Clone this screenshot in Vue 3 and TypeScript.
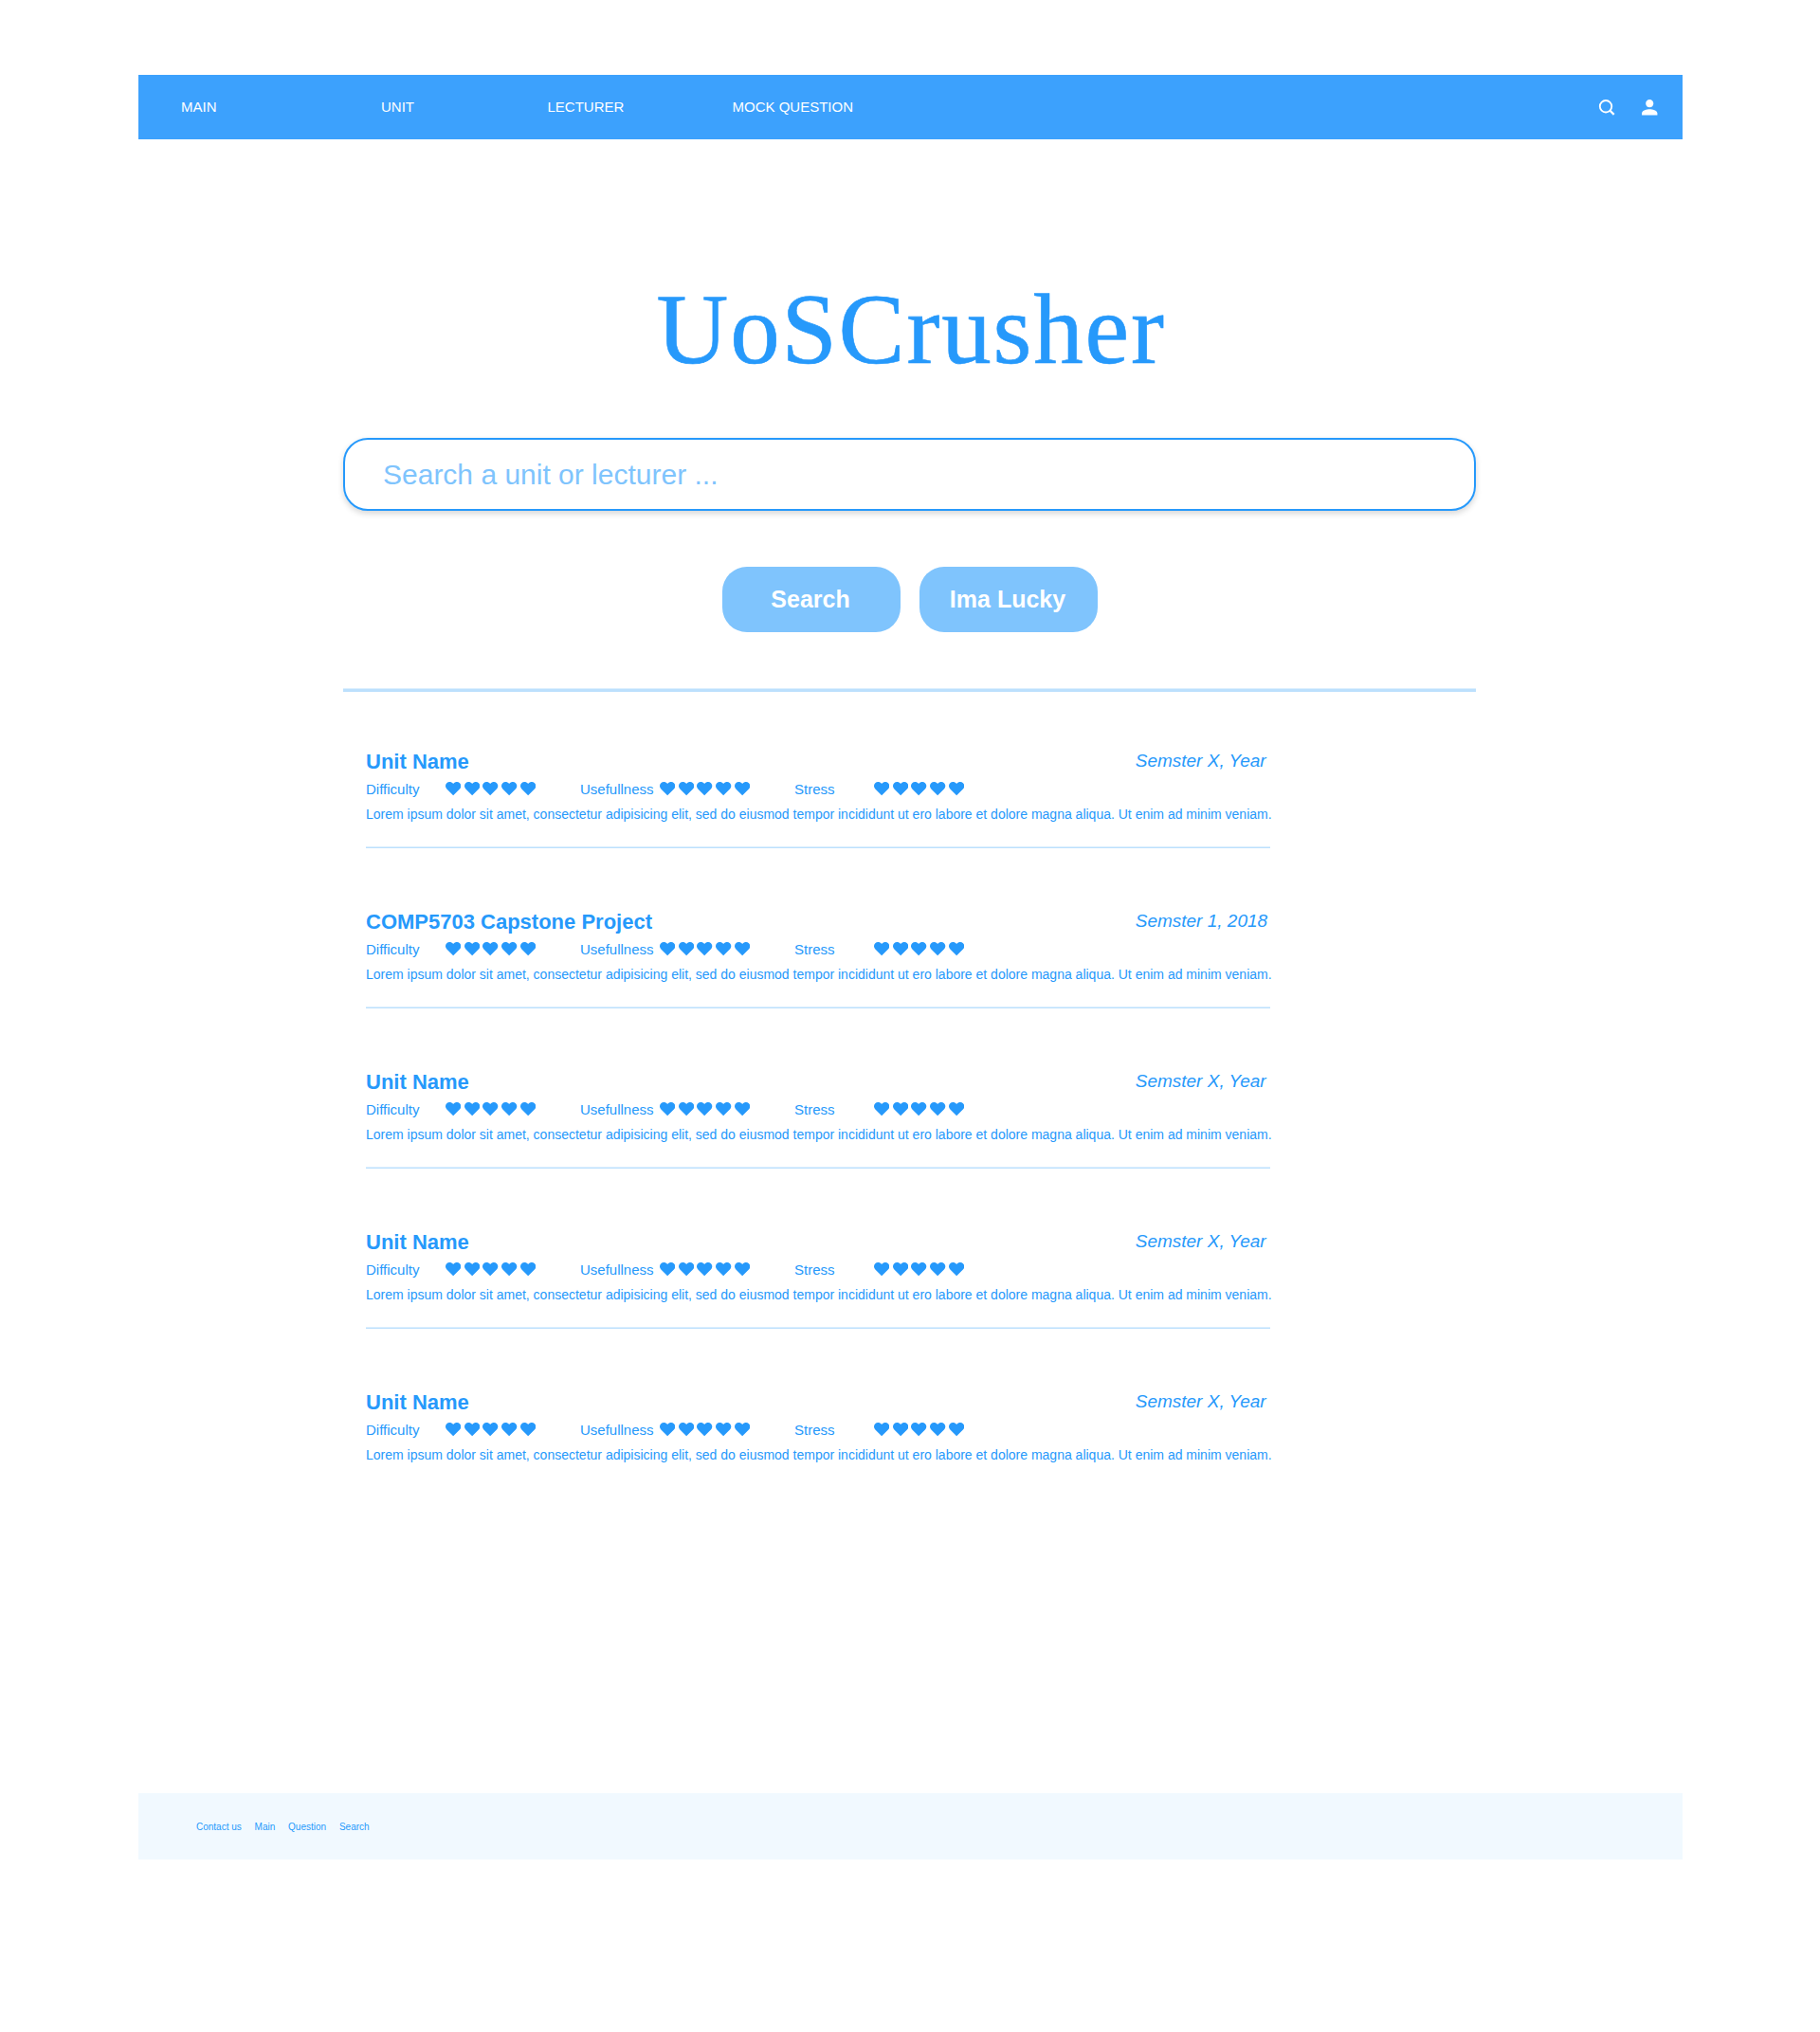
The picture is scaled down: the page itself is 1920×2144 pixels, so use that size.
<script setup lang="ts">
interface Unit {
  name: string
  term: string
}

const navItems: string[] = ['MAIN', 'UNIT', 'LECTURER', 'MOCK QUESTION']
const ratings: string[] = ['Difficulty', 'Usefullness', 'Stress']
const footerLinks: string[] = ['Contact us', 'Main', 'Question', 'Search']
const description =
  'Lorem ipsum dolor sit amet, consectetur adipisicing elit, sed do eiusmod tempor incididunt ut ero labore et dolore magna aliqua. Ut enim ad minim veniam.'

const units: Unit[] = [
  { name: 'Unit Name', term: 'Semster X, Year' },
  { name: 'COMP5703 Capstone Project', term: 'Semster 1, 2018' },
  { name: 'Unit Name', term: 'Semster X, Year' },
  { name: 'Unit Name', term: 'Semster X, Year' },
  { name: 'Unit Name', term: 'Semster X, Year' },
]
</script>

<template>
  <div class="page">
    <header class="navbar">
      <nav class="links">
        <a v-for="item in navItems" :key="item">{{ item }}</a>
      </nav>
      <div class="tools">
        <svg class="search-icon" viewBox="0 0 24 24" fill="none" stroke="#fff">
          <circle cx="10.8" cy="11" r="6.1" stroke-width="1.8" />
          <path d="M15.2 15.4 L19.3 19.5" stroke-width="2.2" />
        </svg>
        <svg class="user-icon" viewBox="0 0 24 24" fill="#fff">
          <path d="M12 12c2.21 0 4-1.79 4-4s-1.79-4-4-4-4 1.79-4 4 1.79 4 4 4zm0 2c-2.67 0-8 1.34-8 4v2h16v-2c0-2.66-5.33-4-8-4z" />
        </svg>
      </div>
    </header>

    <main>
      <h1>UoSCrusher</h1>
      <div class="search-box">Search a unit or lecturer ...</div>
      <div class="actions">
        <button>Search</button>
        <button>Ima Lucky</button>
      </div>
      <div class="divider"></div>

      <section class="units">
        <article v-for="(unit, i) in units" :key="i" class="unit">
          <div class="heading">
            <h2>{{ unit.name }}</h2>
            <span class="term">{{ unit.term }}</span>
          </div>
          <div class="ratings">
            <div v-for="rating in ratings" :key="rating" class="rating">
              <span class="label">{{ rating }}</span>
              <svg v-for="n in 5" :key="n" class="heart" viewBox="0 0 16.3 14.3">
                <path d="M8.15 14.2L1.35 7.6C-.45 5.8-.45 2.9 1.3 1.2 3-.3 6-.4 8.15 1.9 10.3-.4 13.3-.3 15 1.2c1.75 1.7 1.75 4.6-.05 6.4z" />
              </svg>
            </div>
          </div>
          <p>{{ description }}</p>
        </article>
      </section>
    </main>

    <footer>
      <a v-for="link in footerLinks" :key="link">{{ link }}</a>
    </footer>
  </div>
</template>

<style>
body {
  background: #fff;
}
</style>

<style scoped>
.page {
  box-sizing: border-box;
  display: flex;
  flex-direction: column;
  width: 1920px;
  height: 2144px;
  padding: 79px 145px 182px 146px;
  font-family: "Liberation Sans", Arial, sans-serif;
  color: #2699fb;
}

.navbar {
  display: flex;
  justify-content: space-between;
  align-items: center;
  box-sizing: border-box;
  height: 68px;
  padding: 0 23px 0 45px;
  background: #3ca1fd;
  color: #fff;
}

.links {
  display: grid;
  grid-template-columns: 211px 175.5px 195px auto;
  font-size: 15px;
  line-height: 18px;
}

.tools {
  display: flex;
  gap: 20px;
}

.search-icon,
.user-icon {
  width: 24.5px;
  height: 24.5px;
}

main {
  display: flex;
  flex-direction: column;
  flex: 1;
  width: 1195px;
  margin-left: 216px;
}

h1 {
  margin: 141px 0 0;
  height: 174px;
  padding-left: 330.5px;
  font: 400 105px/120px Georgia, "Liberation Serif", serif;
  letter-spacing: 1.8px;
  -webkit-text-stroke: 0.6px #2699fb;
  white-space: nowrap;
}

.search-box {
  box-sizing: border-box;
  height: 77px;
  padding-left: 40px;
  border: 2px solid #2699fb;
  border-radius: 26px;
  box-shadow: 0 3px 6px rgba(0, 0, 0, 0.16);
  font-size: 30px;
  line-height: 73px;
  color: #7fc4fd;
}

.actions {
  display: flex;
  justify-content: center;
  gap: 20px;
  margin: 59px 0;
  padding-left: 1px;
}

button {
  width: 188px;
  height: 69px;
  padding: 0 2px 0 0;
  border: 0;
  border-radius: 26px;
  background: #7fc4fd;
  color: #fff;
  font: 700 25px/69px "Liberation Sans", Arial, sans-serif;
}

.divider {
  height: 3px;
  border-top: 1px solid #dceffe;
  background: #bce0fd;
}

.units {
  width: 954px;
  margin: 61px 0 0 24px;
}

.unit {
  margin-bottom: 65px;
  padding-bottom: 25px;
  border-bottom: 1px solid #bce0fd;
  background: linear-gradient(#dceffe, #dceffe) 0 100% / 100% 1px no-repeat;
}

.unit:last-child {
  background: none;
  border-color: transparent;
}

.heading {
  display: flex;
  justify-content: space-between;
  height: 25px;
}

h2 {
  margin: 0;
  font-size: 22px;
  line-height: 25px;
}

.term {
  width: 142.3px;
  font-size: 19px;
  font-style: italic;
  line-height: 23px;
  white-space: nowrap;
}

.ratings {
  display: flex;
  margin: 6px 0;
}

.rating {
  display: flex;
  align-items: center;
  width: 226px;
  height: 21px;
}

.label {
  width: 84px;
  font-size: 15px;
  line-height: 21px;
}

.heart {
  width: 16.3px;
  height: 14.3px;
  margin-right: 3.45px;
  fill: #2699fb;
}

p {
  margin: 0;
  font-size: 14px;
  line-height: 20px;
  white-space: nowrap;
}

footer {
  display: flex;
  align-items: center;
  gap: 13.8px;
  height: 70px;
  padding-left: 61px;
  background: #f1f9ff;
  font-size: 10px;
}
</style>
